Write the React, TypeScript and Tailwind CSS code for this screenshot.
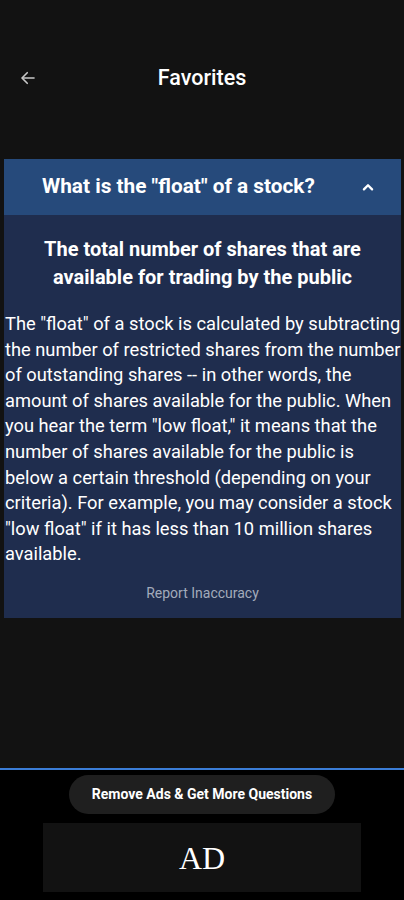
import React from "react";

const lines = [
  'The "float" of a stock is calculated by subtracting',
  "the number of restricted shares from the number",
  "of outstanding shares -- in other words, the",
  "amount of shares available for the public. When",
  'you hear the term "low float," it means that the',
  "number of shares available for the public is",
  "below a certain threshold (depending on your",
  "criteria). For example, you may consider a stock",
  '"low float" if it has less than 10 million shares',
  "available.",
];

export default function App() {
  return (
    <div className="w-[404px] h-[900px] flex flex-col bg-black overflow-hidden" style={{ fontFamily: "Roboto, 'Noto Sans', sans-serif" }}>
      <div className="flex-1 bg-[#121212] flex flex-col">
        <div className="h-[48px] mt-[54px] relative flex items-center justify-center">
          <svg className="absolute left-[19px] top-[15px]" width="18" height="18" viewBox="0 0 24 24" fill="none" stroke="#c8c8c8" strokeWidth="2.2" strokeLinecap="round" strokeLinejoin="round">
            <path d="M20 12H5" />
            <path d="M11 5l-7 7 7 7" />
          </svg>
          <span className="text-[21.5px] font-medium text-white">Favorites</span>
        </div>
        <div className="mt-[57px] mx-[4px] w-[397px] flex flex-col bg-[#1f2d4e]">
          <div className="h-[56px] bg-[#264a7b] flex items-center pl-[38px] pr-[26px] justify-between">
            <span className="text-[20.8px] font-bold text-white">What is the "float" of a stock?</span>
            <svg width="14" height="14" viewBox="0 0 24 24" fill="none" stroke="white" strokeWidth="4" strokeLinecap="round" strokeLinejoin="round">
              <path d="M5 16l7-7 7 7" />
            </svg>
          </div>
          <div className="pt-[20px] px-[20px] text-center text-[20px] font-bold leading-[28px] text-white">
            The total number of shares that are available for trading by the public
          </div>
          <p className="mt-[20px] text-[18.3px] leading-[25.6px] text-white pl-[1px] whitespace-nowrap">
            {lines.map((l, i) => (
              <React.Fragment key={i}>
                {l}
                {i < lines.length - 1 && <br />}
              </React.Fragment>
            ))}
          </p>
          <div className="mt-[16px] mb-[14px] text-center text-[14px] text-[#a3abbb]">Report Inaccuracy</div>
        </div>
      </div>
      <div className="h-[2px] bg-[#3b7dd6]" />
      <div className="h-[130px] bg-black flex flex-col items-center">
        <div className="mt-[5px] w-[266px] h-[39px] rounded-full bg-[#1f1f1f] flex items-center justify-center text-[14px] font-bold text-white">
          Remove Ads &amp; Get More Questions
        </div>
        <div className="mt-[9px] w-[318px] h-[69px] bg-[#121212] flex items-center justify-center text-white text-[32px]" style={{ fontFamily: "'Liberation Serif', serif" }}>
          AD
        </div>
      </div>
    </div>
  );
}
